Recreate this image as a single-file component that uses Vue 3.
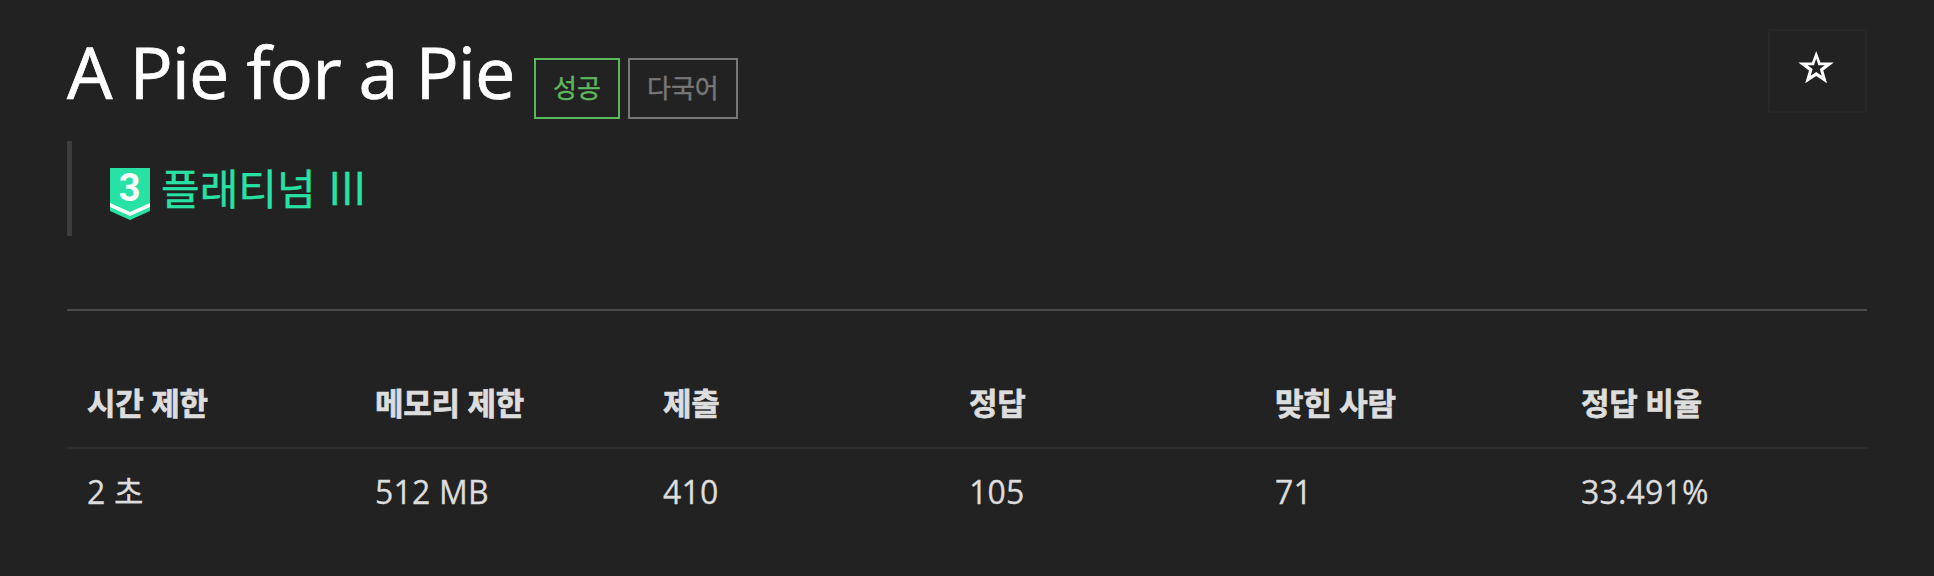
<script setup>
const cols = [
  ['시간 제한', '2 초'], ['메모리 제한', '512 MB'], ['제출', '410'],
  ['정답', '105'], ['맞힌 사람', '71'], ['정답 비율', '33.491%'],
]
</script>

<template>
  <main class="page">
    <header class="head">
      <h1>A Pie for a Pie</h1>
      <span class="label ok">성공</span>
      <span class="label lang">다국어</span>
      <button class="star" aria-label="star">
        <svg viewBox="0 0 36 34" width="36" height="34"><path fill-rule="evenodd" fill="#fff" d="M18.2 1L22.5 12.6H35.8L25.3 20.6L29 33.3L18.2 26L7.2 33.3L11 20.6L.3 12.6H14ZM18.2 8.5L16 15.2H9.6L14.6 19L12.7 25.8L18.2 22L23.7 25.8L21.8 19L26.8 15.2H20.4Z" /></svg>
      </button>
    </header>
    <blockquote class="tier">
      <svg class="badge" viewBox="0 0 40 52" width="40" height="52">
        <path d="M0 0H40V43L20 52L0 43Z" fill="#27e2a4" />
        <path d="M0 35L20 44L40 35V39L20 48L0 39Z" fill="#fff" />
        <text x="19.7" y="33.4" text-anchor="middle">3</text>
      </svg>
      <span>플래티넘 <span class="numeral">III</span></span>
    </blockquote>
    <hr />
    <table>
      <colgroup><col v-for="(c, i) in cols" :key="i" :class="i < 2 ? 'narrow' : 'wide'" /></colgroup>
      <thead><tr><th v-for="c in cols" :key="c[0]">{{ c[0] }}</th></tr></thead>
      <tbody><tr><td v-for="c in cols" :key="c[0]">{{ c[1] }}</td></tr></tbody>
    </table>
  </main>
</template>

<style>
body { background: #222; }
</style>
<style scoped>
.page { box-sizing: border-box; height: 576px; padding: 29px 67px 0; background: #222; color: #ddd; font-family: "Open Sans", "Noto Sans CJK KR", sans-serif; overflow: hidden; }
.head { display: flex; height: 112px; }
h1 { margin: 0; width: 467px; font-size: 72px; line-height: 84px; font-weight: 400; letter-spacing: -0.9px; color: #fff; white-space: nowrap; -webkit-text-stroke: 0.7px #fff; }
.label { box-sizing: border-box; height: 61px; margin: 29px 8px 0 0; border: 2px solid; padding: 0 17px; font-size: 26px; line-height: 57px; white-space: nowrap; -webkit-text-stroke: 0.4px currentColor; }
.ok { color: #5cb85c; width: 86px; }
.lang { color: #777; width: 110px; }
.star { box-sizing: border-box; margin-left: auto; width: 99px; height: 84px; padding: 0 3px 8px 0; border: 2px solid #272727; background: #222; display: flex; justify-content: center; align-items: center; }
.tier { box-sizing: border-box; margin: 0; height: 95px; border-left: 5px solid #3d3d3d; padding-left: 38px; display: flex; color: #27e2a4; font-size: 42px; line-height: 96px; white-space: nowrap; -webkit-text-stroke: 0.4px currentColor; }
.tier > span { margin-left: -1px; }
.numeral { margin-left: 2px; font-size: 45px; line-height: 1; }
.badge { margin: 27px 12px 0 0; }
.badge text { fill: #fff; stroke: none; font-family: Roboto, sans-serif; font-size: 38px; line-height: 1; font-weight: 700; -webkit-text-stroke: 0; }
hr { margin: 73px 0 50px; border: 0; height: 2px; background: #4b4b4b; }
table { width: 1800px; table-layout: fixed; border-collapse: collapse; font-size: 32px; line-height: 46px; }
.narrow { width: 288px; }
.wide { width: 306px; }
th, td { text-align: left; padding: 20px; }
td { letter-spacing: 0.2px; -webkit-text-stroke: 0.3px currentColor; }
th { padding: 19px 20px 21px; font-weight: 700; font-size: 31px; letter-spacing: -0.3px; border-bottom: 2px solid #2d2d2d; -webkit-text-stroke: 0.7px currentColor; }
</style>
